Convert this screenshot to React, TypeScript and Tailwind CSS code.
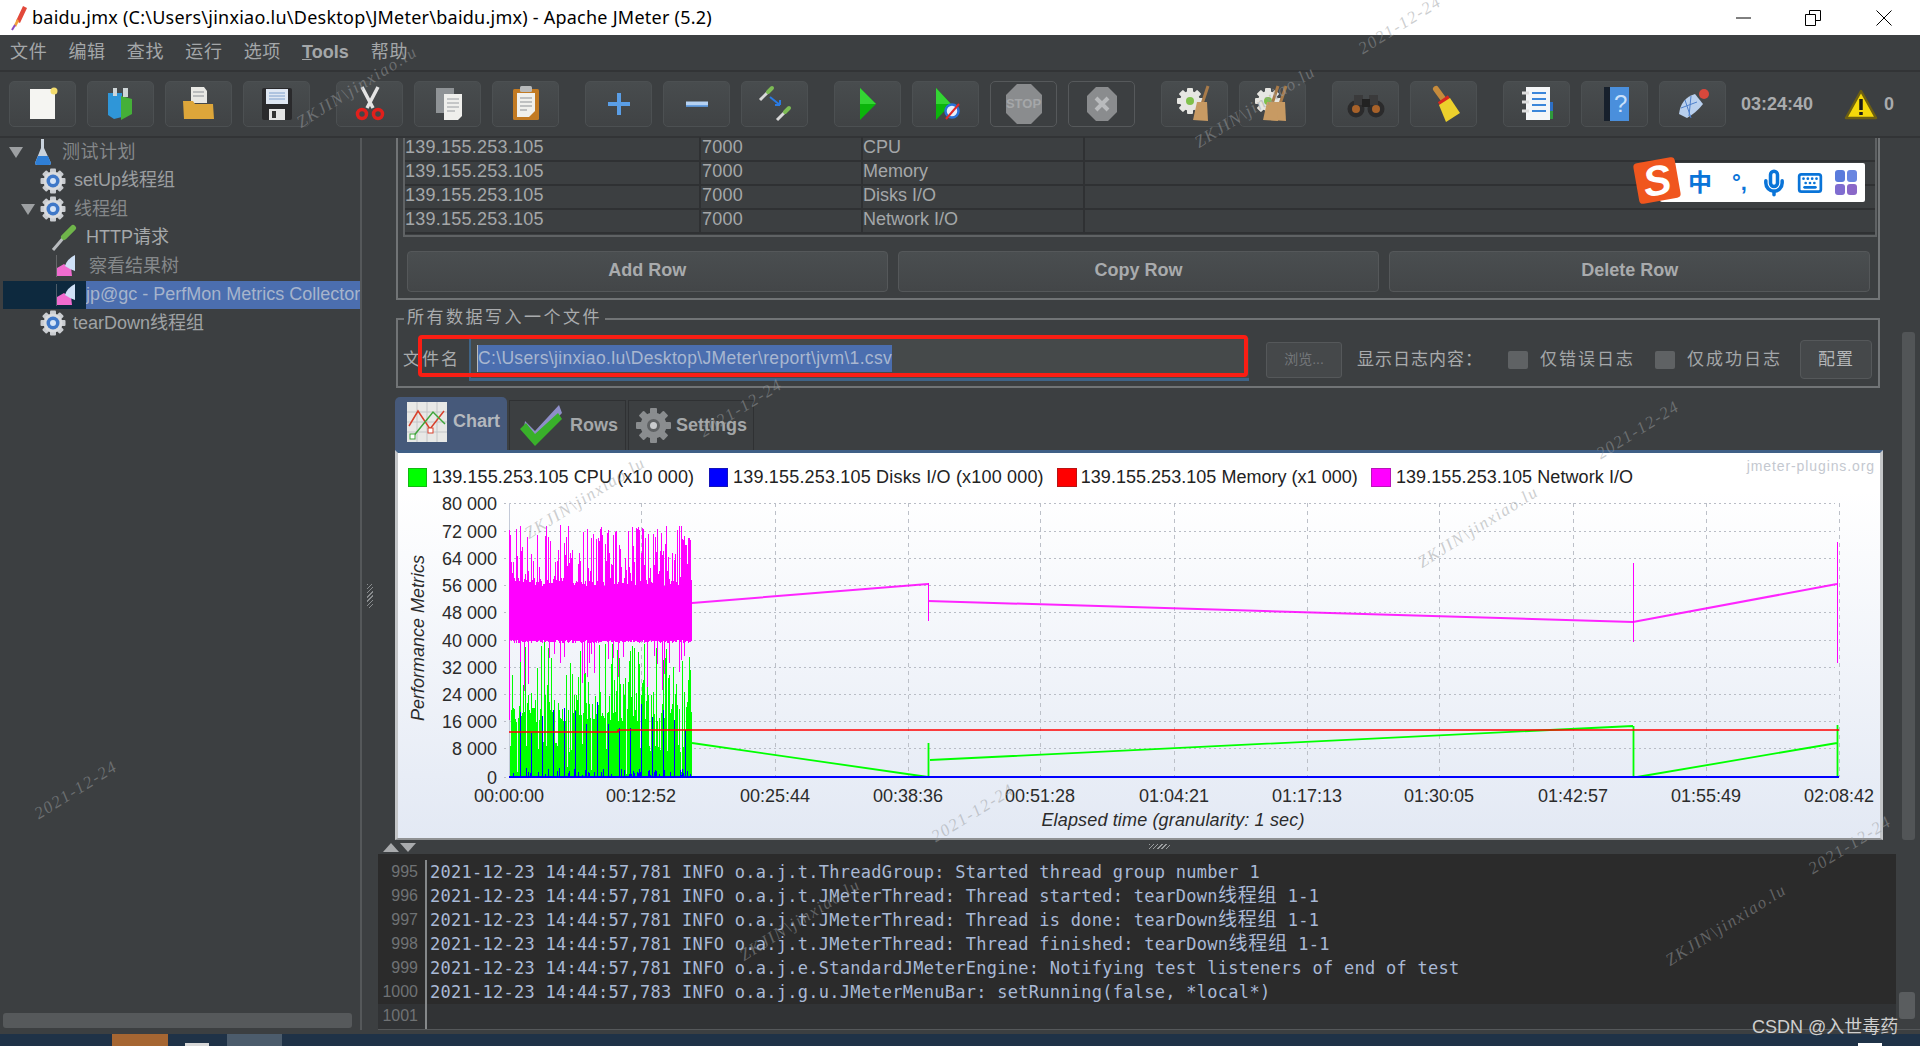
import React from 'react';
import { Mic, Keyboard } from 'lucide-react';

const menus = ['文件', '编辑', '查找', '运行', '选项', 'Tools', '帮助'];

const logLines = [
  ['995', '2021-12-23 14:44:57,781 INFO o.a.j.t.ThreadGroup: Started thread group number 1'],
  ['996', '2021-12-23 14:44:57,781 INFO o.a.j.t.JMeterThread: Thread started: tearDown线程组 1-1'],
  ['997', '2021-12-23 14:44:57,781 INFO o.a.j.t.JMeterThread: Thread is done: tearDown线程组 1-1'],
  ['998', '2021-12-23 14:44:57,781 INFO o.a.j.t.JMeterThread: Thread finished: tearDown线程组 1-1'],
  ['999', '2021-12-23 14:44:57,781 INFO o.a.j.e.StandardJMeterEngine: Notifying test listeners of end of test'],
  ['1000', '2021-12-23 14:44:57,783 INFO o.a.j.g.u.JMeterMenuBar: setRunning(false, *local*)'],
];

const metrics = ['CPU', 'Memory', 'Disks I/O', 'Network I/O'];

const yTicks: [string, number][] = [
  ['80 000', 503], ['72 000', 531], ['64 000', 558], ['56 000', 585], ['48 000', 612], ['40 000', 640],
  ['32 000', 667], ['24 000', 694], ['16 000', 721], ['8 000', 748], ['0', 777],
];

const xTicks: [string, number][] = [
  ['00:00:00', 509], ['00:12:52', 641], ['00:25:44', 775], ['00:38:36', 908], ['00:51:28', 1040], ['01:04:21', 1174],
  ['01:17:13', 1307], ['01:30:05', 1439], ['01:42:57', 1573], ['01:55:49', 1706], ['02:08:42', 1839],
];

const marks: [string, number, number][] = [
  ['ZKJIN\\jinxiao.lu', 357, 87], ['2021-12-24', 1400, 25], ['ZKJIN\\jinxiao.lu', 1255, 107], ['2021-12-24', 76, 790],
  ['ZKJIN\\jinxiao.lu', 585, 498], ['2021-12-24', 741, 408], ['ZKJIN\\jinxiao.lu', 1478, 527], ['2021-12-24', 1638, 430],
  ['2021-12-24', 973, 813], ['ZKJIN\\jinxiao.lu', 1726, 925], ['2021-12-24', 1850, 845], ['ZKJIN\\jinxiao.lu', 800, 920],
];

// noisy first part of the run, same picture on every render
let seed = 11;
const rnd = () => {
  seed = (seed * 16807) % 2147483647;
  return seed / 2147483647;
};

const buildSeries = () => {
  let pink = 'M509.5 530V720';
  let green = '';
  let blue = '';
  for (let x = 510; x < 692; x++) {
    const r = rnd();
    const top = r < 0.3 ? 525 + rnd() * 22 : r < 0.6 ? 548 + rnd() * 30 : 578 + rnd() * 8;
    const r2 = rnd();
    const bottom = r2 < 0.14 ? 652 + rnd() * 12 : r2 < 0.18 ? 668 + rnd() * 24 : 640 + rnd() * 3;
    pink += `M${x}.5 ${top.toFixed(0)}V${bottom.toFixed(0)}`;
    const g = rnd();
    const gt = g < 0.3 ? 642 + rnd() * 45 : g < 0.5 ? 690 + rnd() * 20 : g < 0.84 ? 708 + rnd() * 14 : g < 0.94 ? 742 + rnd() * 10 : 764 + rnd() * 10;
    green += `M${x}.5 ${gt.toFixed(0)}V777`;
    const b = rnd();
    if (x % 11 === 3) blue += `M${x}.5 ${(695 + rnd() * 45).toFixed(0)}V777`;
    else if (b < 0.28) blue += `M${x}.5 ${(768 + rnd() * 8).toFixed(0)}V777`;
  }
  return { pink, green, blue };
};

const series = buildSeries();

const Gear = ({ size = 26, center = '#3f78c8' }: { size?: number; center?: string }) => (
  <svg width={size} height={size} viewBox="0 0 26 26">
    {[0, 45, 90, 135].map((a) => (
      <rect key={a} x="10" y="0.5" width="6" height="25" rx="1" fill="#c9ccd0" transform={`rotate(${a} 13 13)`} />
    ))}
    <circle cx="13" cy="13" r="9.5" fill="#d9dbde" />
    <circle cx="13" cy="13" r="6.5" fill={center} />
    <circle cx="13" cy="13" r="3" fill="#d5e4f7" />
  </svg>
);

const Flask = () => (
  <svg width="18" height="28" viewBox="0 0 18 28">
    <path d="M7 1h3v9l7 15q0 2-2 2H3q-2 0-2-2l6-15z" fill="#c9d2dc" />
    <path d="M4 18h10l3 7q0 2-2 2H3q-2 0-2-2z" fill="#2f7fd6" />
  </svg>
);

const Pipette = () => (
  <svg width="28" height="27" viewBox="0 0 28 27">
    <path d="M2 26 14 12" stroke="#b9bcbf" strokeWidth="3" />
    <path d="M13 13 22 4" stroke="#6fb54a" strokeWidth="6" strokeLinecap="round" />
  </svg>
);

const Listener = () => (
  <svg width="21" height="22" viewBox="0 0 21 22">
    <path d="M1 21V13l7-4 5 4 2-1 1 9z" fill="#f06ccf" />
    <path d="M9 11Q11 4 19 0v16l-5-2z" fill="#cfe1f7" />
    <path d="M0 0v22" stroke="#8d9092" />
  </svg>
);

const Arrow = () => <span className="h-0 w-0 border-x-[7px] border-t-[11px] border-x-transparent border-t-[#9da0a2]" />;

const TreeRow = ({ indent, children, selected }: { indent: number; children: React.ReactNode; selected?: boolean }) => (
  <div className={`relative flex h-[28.5px] items-center whitespace-nowrap ${selected ? 'bg-[#0d293e]' : ''}`} style={{ paddingLeft: indent }}>
    {children}
  </div>
);

const ToolBtn = ({ children, off }: { children: React.ReactNode; off?: boolean }) => (
  <div className={`flex h-[46px] w-[67px] items-center justify-center rounded-[5px] border ${off ? 'border-[#56595b] bg-[#3c3f41]' : 'border-[#4c5052] bg-linear-to-b from-[#484c4e] to-[#404345]'}`}>
    {children}
  </div>
);

const Svg = ({ children }: { children: React.ReactNode }) => (
  <svg width="40" height="40" viewBox="0 0 40 40">{children}</svg>
);

const Broom = ({ x = 0 }: { x?: number }) => (
  <g transform={`translate(${x} 0)`}>
    <path d="M33 2 27 20" stroke="#a87b4a" strokeWidth="3" />
    <path d="M22 18h10l1 19-15-1z" fill="#c79a63" />
  </g>
);

const ConfigGear = () => (
  <g>
    {[0, 45, 90, 135].map((a) => (
      <rect key={a} x="12" y="4" width="6" height="26" rx="1" fill="#e6e6e2" transform={`rotate(${a} 15 17)`} />
    ))}
    <circle cx="15" cy="17" r="10" fill="#e6e6e2" />
    <circle cx="15" cy="17" r="4" fill="#7fc04a" />
  </g>
);

const Pen = ({ x, y }: { x: number; y: number }) => (
  <g transform={`translate(${x} ${y})`}>
    <path d="M0 13 8 5" stroke="#d8d8d8" strokeWidth="3" />
    <path d="M8 5 12 1" stroke="#7dbb55" strokeWidth="4" strokeLinecap="round" />
  </g>
);

const toolbar: { off?: boolean; icon: React.ReactNode }[][] = [
  [
    { icon: <Svg><rect x="7" y="5" width="25" height="30" fill="#f5f5f2" /><circle cx="31" cy="7" r="3.5" fill="#f3dc6e" /></Svg> },
    { icon: <Svg><path d="M7 9h14v24l-8 2-6-4z" fill="#2f96d8" /><path d="M20 12l11 3v15l-11 6z" fill="#45b038" /><path d="M12 4h4v8h-4zM22 4h5v9h-5z" fill="#cfd6d8" /></Svg> },
    { icon: <Svg><path d="M12 3h13l3 4v12H12z" fill="#e8e8e4" /><path d="M14 8h11M14 12h11" stroke="#8a8f95" /><path d="M4 17h10l2 3h18l1 15H5z" fill="#dda63a" /></Svg> },
    { icon: <Svg><rect x="5" y="4" width="30" height="32" rx="2" fill="#2a2a2c" /><rect x="9" y="5" width="22" height="15" fill="#dfe7f2" /><path d="M12 9h16M12 12h16M12 15h16" stroke="#7fa0cc" /><rect x="12" y="25" width="16" height="11" fill="#e4e4e4" /><rect x="15" y="27" width="4" height="7" fill="#333" /></Svg> },
  ],
  [
    { icon: <Svg><path d="M12 3 23 24M28 3 17 24" stroke="#e4e4e4" strokeWidth="3.5" /><circle cx="12" cy="30" r="4.5" fill="none" stroke="#e0201c" strokeWidth="3.5" /><circle cx="28" cy="30" r="4.5" fill="none" stroke="#e0201c" strokeWidth="3.5" /></Svg> },
    { icon: <Svg><rect x="8" y="4" width="18" height="25" fill="#8f9396" /><path d="M16 10h18v22l-4 4H16z" fill="#efefec" /><path d="M19 15h12M19 19h12M19 23h12M19 27h8" stroke="#9a9ea2" /></Svg> },
    { icon: <Svg><rect x="7" y="5" width="26" height="31" rx="1.5" fill="#c27a22" /><rect x="14" y="2" width="12" height="6" rx="1.5" fill="#b7b9ba" /><path d="M11 9h18v18l-6 6H11z" fill="#f0f0ec" /><path d="M14 14h12M14 18h12M14 22h12M14 26h7" stroke="#8d9195" /></Svg> },
  ],
  [
    { icon: <Svg><path d="M20 9v22M9 20h22" stroke="#5a9ee6" strokeWidth="4" /></Svg> },
    { icon: <Svg><path d="M9 20h22" stroke="#b6d2f2" strokeWidth="5" /><path d="M9 22h22" stroke="#4f8fd8" strokeWidth="1.5" /></Svg> },
    { icon: <Svg><Pen x={5} y={3} /><Pen x={22} y={23} /><path d="M15 13 25 21M25 21v-5M25 21h-5" stroke="#2a7ae2" strokeWidth="2" fill="none" /></Svg> },
  ],
  [
    { icon: <Svg><path d="M12 4 28 20 12 36z" fill="#0bb50b" /><path d="M12 4 28 20H12z" fill="#34d534" /></Svg> },
    { icon: <Svg><path d="M10 4 25 20 10 36z" fill="#0bb50b" /><path d="M10 4 25 20H10z" fill="#34d534" /><circle cx="26" cy="27" r="6.5" fill="#e7eefb" stroke="#2a72d8" strokeWidth="2.5" /><path d="M20 35 33 20" stroke="#e02828" strokeWidth="2" /></Svg> },
    { off: true, icon: <div className="relative flex h-[40px] w-[36px] items-center justify-center"><svg className="absolute inset-0" width="36" height="40" viewBox="0 0 36 40"><path d="M11 0h14l11 11v18L25 40H11L0 29V11z" fill="#8a8c8e" /></svg><span className="relative text-[13px] font-bold text-[#a5a7a9]">STOP</span></div> },
    { off: true, icon: <svg width="30" height="34" viewBox="0 0 30 34"><path d="M9 0h12l9 9v16l-9 9H9l-9-9V9z" fill="#8a8c8e" /><path d="M9 11 21 23M21 11 9 23" stroke="#b9bbbd" strokeWidth="4" /></svg> },
  ],
  [
    { icon: <Svg><ConfigGear /><Broom /></Svg> },
    { icon: <Svg><ConfigGear /><Broom /><Broom x={-8} /></Svg> },
  ],
  [
    { icon: <Svg><circle cx="10" cy="25" r="8.5" fill="#2b2b2c" /><circle cx="30" cy="25" r="8.5" fill="#2b2b2c" /><rect x="8" y="11" width="9" height="10" fill="#3a3a3b" /><rect x="23" y="11" width="9" height="10" fill="#3a3a3b" /><rect x="16" y="15" width="8" height="8" fill="#222" /><circle cx="10" cy="25" r="4" fill="#a8622a" /><circle cx="30" cy="25" r="4" fill="#a8622a" /></Svg> },
    { icon: <Svg><path d="M12 5 20 16" stroke="#c68b3c" strokeWidth="6" strokeLinecap="round" /><path d="M15 20 25 13" stroke="#d8261e" strokeWidth="4" /><path d="M15 21 26 14 36 29 22 38z" fill="#ecd02c" /></Svg> },
  ],
  [
    { icon: <Svg><rect x="9" y="3" width="24" height="33" fill="#f4f6f8" /><rect x="33" y="18" width="3" height="9" fill="#2d6fc4" /><rect x="33" y="27" width="3" height="8" fill="#2f9a3c" /><path d="M5 9h7M5 18h7M5 27h7" stroke="#ddd" strokeWidth="3" /><path d="M15 9h14M15 15h14M15 21h14M15 27h14" stroke="#3b86da" strokeWidth="2" /></Svg> },
    { icon: <Svg><rect x="9" y="3" width="25" height="34" fill="#4a8fdc" /><rect x="9" y="3" width="6" height="34" fill="#17202c" /><text x="19" y="28" fontSize="24" fill="#c9e0fa" fontFamily="Liberation Sans">?</text></Svg> },
    { icon: <Svg><path d="M6 30Q8 14 22 10l8 10q-6 8-16 14z" fill="#b9d0ee" /><path d="M8 24l16-6M12 16l6 18M18 12l-2 20" stroke="#4e80cc" /><circle cx="31" cy="10" r="5" fill="#d8483c" /></Svg> },
  ],
];

const LogText = ({ line }: { line: string }) => {
  const parts = line.split('线程组');
  if (parts.length === 1) return <span className="ml-[3px] whitespace-pre leading-[24px]">{line}</span>;
  return (
    <span className="ml-[3px] whitespace-pre leading-[24px]">
      {parts[0]}
      <span className="text-[19px] leading-none tracking-[0.8px]">线程组</span>
      {parts[1]}
    </span>
  );
};

const App = () => {
  return (
    <div className="relative flex h-[1046px] w-[1920px] flex-col overflow-hidden bg-[#3c3f41] font-['Liberation_Sans','Noto_Sans_CJK_SC',sans-serif] text-[18px] text-[#bbbbbb]">
      {/* title bar */}
      <div className="flex h-[35px] items-center bg-white pl-[8px] text-black">
        <svg width="20" height="30" viewBox="0 0 20 30">
          <path d="M8 18 15 3l4 2-7 15z" fill="#e2483a" />
          <path d="M6 22l3-6 2 2-3 6z" fill="#f2a03c" />
          <path d="M4 27l3-5" stroke="#8a4bc0" strokeWidth="2" />
        </svg>
        <span className="ml-[4px] whitespace-nowrap font-['Noto_Sans',sans-serif] text-[18px] tracking-[0.24px]">baidu.jmx (C:\Users\jinxiao.lu\Desktop\JMeter\baidu.jmx) - Apache JMeter (5.2)</span>
        <div className="ml-auto flex items-center pr-[28px]">
          <svg width="16" height="16" viewBox="0 0 16 16"><path d="M0 8h15" stroke="#000" /></svg>
          <svg className="ml-[53px]" width="16" height="16" viewBox="0 0 16 16"><path d="M.5 4.5h10v11H.5zM4.5 4V.5h11v10H11" fill="none" stroke="#000" /></svg>
          <svg className="ml-[55px]" width="16" height="16" viewBox="0 0 16 16"><path d="M.5.5l15 15M15.5.5l-15 15" stroke="#000" /></svg>
        </div>
      </div>

      {/* menu */}
      <div className="flex h-[37px] items-center gap-[21px] border-b-2 border-[#323436] pb-[1px] pl-[10px] text-[#a4a7a9]">
        {menus.map((m) => (
          <span key={m} className={m === 'Tools' ? 'mr-[1px] font-bold' : 'tracking-[0.7px]'}>
            {m === 'Tools' ? <><span className="underline">T</span>ools</> : m}
          </span>
        ))}
      </div>

      {/* toolbar */}
      <div className="flex h-[66px] items-center gap-[26px] border-b-2 border-[#323436] pl-[9px]">
        {toolbar.map((group, i) => (
          <div key={i} className="flex gap-[11px]">
            {group.map((b, j) => (
              <ToolBtn key={j} off={b.off}>{b.icon}</ToolBtn>
            ))}
          </div>
        ))}
        <div className="-ml-[11px] flex items-center">
          <span className="text-[18px] font-bold text-[#a9abad]">03:24:40</span>
          <svg className="ml-[31px]" width="34" height="31" viewBox="0 0 34 31">
            <path d="M17 2 32 29H2z" fill="#f5d90a" stroke="#6d5f12" strokeWidth="2.5" strokeLinejoin="round" />
            <path d="M17 10v11M17 23v3" stroke="#1a1a1a" strokeWidth="3.5" />
          </svg>
          <span className="ml-[6px] font-bold text-[#a9abad]">0</span>
        </div>
      </div>

      {/* main split */}
      <div className="flex h-[892px]">
        {/* tree */}
        <div className="flex w-[362px] flex-col border-r-2 border-[#55585a] pl-[3px]">
          <TreeRow indent={6}>
            <Arrow />
            <span className="ml-[11px] flex"><Flask /></span>
            <span className="ml-[10px] tracking-[0.5px] text-[#85888a]">测试计划</span>
          </TreeRow>
          <TreeRow indent={37}>
            <Gear />
            <span className="ml-[8px] text-[#9c9fa1]">setUp线程组</span>
          </TreeRow>
          <TreeRow indent={18}>
            <Arrow />
            <span className="ml-[5px] flex"><Gear /></span>
            <span className="ml-[8px] text-[#85888a]">线程组</span>
          </TreeRow>
          <TreeRow indent={48}>
            <Pipette />
            <span className="ml-[7px] text-[#a6a9ab]">HTTP请求</span>
          </TreeRow>
          <TreeRow indent={53}>
            <Listener />
            <span className="ml-[12px] text-[#85888a]">察看结果树</span>
          </TreeRow>
          <TreeRow indent={53} selected>
            <Listener />
            <span className="ml-[9px] flex h-full flex-1 items-center overflow-hidden bg-[#4b6eaf] text-[#a6b4cc]">jp@gc - PerfMon Metrics Collector</span>
          </TreeRow>
          <TreeRow indent={37}>
            <Gear />
            <span className="ml-[7px] text-[#a0a3a5]">tearDown线程组</span>
          </TreeRow>
          <div className="mt-auto mb-[2px] mr-[8px] h-[15px] rounded-[3px] bg-[#56595b]" />
        </div>

        {/* vertical divider */}
        <div className="flex w-[16px] items-center justify-center">
          <div className="mt-[24px] h-[24px] w-[6px] bg-[repeating-linear-gradient(135deg,#8a8d8f_0_1px,transparent_1px_3px)]" />
        </div>

        {/* right side */}
        <div className="flex w-[1542px] flex-col">
          <div className="flex h-[716px]">
            <div className="flex w-[1518px] flex-col pl-[17px]">
              {/* server table */}
              <div className="ml-[1px] flex h-[162px] w-[1484px] flex-col border-x-2 border-b-2 border-[#717476] px-[5px]">
                <div className="h-[99px] w-[1474px] border-x-2 border-b-2 border-[#5f6264]">
                  {metrics.map((m) => (
                    <div key={m} className="grid h-[24px] grid-cols-[296px_162px_222px_1fr] border-b-2 border-[#2f3133] text-[#a4a7a9]">
                      <span className="-mt-[1px] border-r-2 border-[#2f3133] leading-[20px] tracking-[0.25px]">139.155.253.105</span>
                      <span className="-mt-[1px] border-r-2 border-[#2f3133] pl-[1px] leading-[20px] tracking-[0.25px]">7000</span>
                      <span className="-mt-[1px] border-r-2 border-[#2f3133] leading-[20px]">{m}</span>
                      <span />
                    </div>
                  ))}
                </div>
                <div className="mt-[14px] flex gap-[10.5px] pl-[4px] pr-[3px]">
                  {['Add Row', 'Copy Row', 'Delete Row'].map((b) => (
                    <div key={b} className="flex h-[41px] flex-1 items-center justify-center rounded-[4px] border border-[#55585a] bg-linear-to-b from-[#4a4e50] to-[#434648] pb-[2px] font-bold text-[#a9abad]">
                      {b}
                    </div>
                  ))}
                </div>
              </div>

              {/* output file */}
              <div className="relative ml-[1px] mt-[18px] flex h-[70px] w-[1484px] items-center border-2 border-[#717476] pl-[5px] pt-[13px]">
                <span className="absolute -top-[15px] left-[6px] bg-[#3c3f41] px-[3px] text-[17px] tracking-[2.5px] text-[#a9abad]">所有数据写入一个文件</span>
                <span className="w-[66px] text-[17px] tracking-[2px] text-[#a9abad]">文件名</span>
                <div className="flex h-[43px] w-[780px] items-center border-b-[3px] border-l-2 border-[#3f6487] bg-[#45494a] pl-[6px]">
                  <span className="flex h-[27px] items-center whitespace-nowrap border-l border-[#bbbbbb] bg-[#4b6eaf] text-[17.5px] tracking-[0.34px] text-[#a9b7d0]">C:\Users\jinxiao.lu\Desktop\JMeter\report\jvm\1.csv</span>
                </div>
                <div className="ml-[17px] flex h-[36px] w-[76px] items-center justify-center rounded-[3px] border border-[#55585a] bg-[#45484a] text-[14px] text-[#74777a]">浏览...</div>
                <span className="ml-[15px] text-[17px] tracking-[1px] text-[#a9abad]">显示日志内容：</span>
                <span className="ml-[25px] h-[18px] w-[20px] rounded-[2px] bg-[#5f6264]" />
                <span className="ml-[12px] text-[17px] tracking-[2px] text-[#a4a7a9]">仅错误日志</span>
                <span className="ml-[20px] h-[18px] w-[20px] rounded-[2px] bg-[#5f6264]" />
                <span className="ml-[12px] text-[17px] tracking-[2px] text-[#a4a7a9]">仅成功日志</span>
                <div className="ml-[18px] flex h-[39px] w-[72px] items-center justify-center rounded-[4px] border border-[#55585a] bg-[#45484a] text-[17px] tracking-[1px] text-[#b4b6b8]">配置</div>
              </div>

              {/* tabs */}
              <div className="mt-[9px] flex h-[53px] items-end gap-[2px]">
                <div className="flex h-[53px] w-[112px] items-center rounded-t-[5px] bg-[#46597a] pb-[4px] pl-[12px]">
                  <svg width="40" height="40" viewBox="0 0 40 40">
                    <rect width="40" height="40" fill="#e8e8e6" />
                    <path d="M0 10h40M0 20h40M0 30h40M10 0v40M20 0v40M30 0v40" stroke="#c4c6c8" />
                    <path d="M2 24 11 9l12 18 14-18" fill="none" stroke="#d8402c" strokeWidth="1.5" />
                    <path d="M5 36 26 10l12 12" fill="none" stroke="#3ea53a" strokeWidth="1.5" />
                    <rect x="21" y="26" width="5" height="5" fill="#fff" stroke="#d8402c" />
                    <rect x="3" y="32" width="5" height="5" fill="#fff" stroke="#3ea53a" />
                  </svg>
                  <span className="ml-[6px] font-bold text-[#b4b8be]">Chart</span>
                </div>
                <div className="flex h-[50px] w-[117px] items-center border-x border-t border-[#2f3133] pl-[9px]">
                  <svg width="45" height="45" viewBox="0 0 45 45">
                    <path d="M6 18 16 28 40 2l3 8-26 27-12-12z" fill="#8e8ec8" />
                    <path d="M1 26l6-6 9 11 23-21 4 6-27 27z" fill="#39b02a" />
                  </svg>
                  <span className="ml-[6px] font-bold text-[#a4a7a9]">Rows</span>
                </div>
                <div className="flex h-[50px] w-[126px] items-center border-x border-t border-[#2f3133] pl-[7px]">
                  <svg width="35" height="35" viewBox="0 0 35 35">
                    {[0, 45, 90, 135].map((a) => (
                      <rect key={a} x="14" y="0" width="7" height="35" rx="1" fill="#8a8d8f" transform={`rotate(${a} 17.5 17.5)`} />
                    ))}
                    <circle cx="17.5" cy="17.5" r="13" fill="#8a8d8f" />
                    <circle cx="17.5" cy="17.5" r="6.5" fill="#5e6163" />
                    <circle cx="17.5" cy="17.5" r="3.5" fill="#c9cbcd" />
                  </svg>
                  <span className="ml-[5px] font-bold text-[#a4a7a9]">Settings</span>
                </div>
              </div>

              {/* chart */}
              <div className="relative h-[390px] w-[1488px] border-x-[3px] border-b-[2px] border-t-[3px] border-b-[#8f9193] border-l-[#c4c6c8] border-r-[#c4c6c8] border-t-[#3f5f86] bg-linear-to-b from-white from-10% to-[#e3e9f4]">
                <span className="absolute right-[5px] top-[3px] text-[14px] tracking-[0.9px] text-[#c4c8d0]">jmeter-plugins.org</span>
                <div className="flex h-[44px] items-center pl-[10px] pt-[5px] text-[18px] text-[#222222]">
                  <span className="h-[19px] w-[19px] border border-[#14b814] bg-[#00ff00]" />
                  <span className="ml-[5px] tracking-[0.1px]">139.155.253.105 CPU (x10 000)</span>
                  <span className="ml-[15px] h-[19px] w-[19px] border border-[#1414b8] bg-[#0000ff]" />
                  <span className="ml-[5px] tracking-[0.18px]">139.155.253.105 Disks I/O (x100 000)</span>
                  <span className="ml-[13px] h-[19px] w-[20px] border border-[#b81414] bg-[#ff0000]" />
                  <span className="ml-[4px] tracking-[0.03px]">139.155.253.105 Memory (x1 000)</span>
                  <span className="ml-[13px] h-[19px] w-[20px] border border-[#b814b8] bg-[#ff00ff]" />
                  <span className="ml-[5px] tracking-[0.08px]">139.155.253.105 Network I/O</span>
                </div>
                <svg className="block" width="1482" height="341" viewBox="398 497 1482 341" fontFamily="Liberation Sans" fontSize="18" fill="#2b2b2b">
                  {yTicks.map(([label, y]) => (
                    <g key={label}>
                      <path d={`M504 ${y}.5H1835`} stroke="#b9bdc6" strokeDasharray="2 3" />
                      <text x="497" y={y + 7} textAnchor="end">{label}</text>
                    </g>
                  ))}
                  {xTicks.map(([label, x]) => (
                    <g key={label}>
                      {x > 509 && <path d={`M${x}.5 503V777`} stroke="#bcc0c8" strokeDasharray="4 4" />}
                      <text x={x} y="802" textAnchor="middle">{label}</text>
                    </g>
                  ))}
                  <path d="M509.5 503V777" stroke="#c4cad8" />
                  <text transform="translate(424 638) rotate(-90)" textAnchor="middle" fontStyle="italic">Performance Metrics</text>
                  <text x="1173" y="826" textAnchor="middle" fontStyle="italic" letterSpacing="0.15">Elapsed time (granularity: 1 sec)</text>

                  <path d={series.green} stroke="#00ff00" />
                  <path d="M692 743 928 777M928.5 743V777M930 760 1633 726M1633.5 726V777M1637 777 1837 743M1837.5 725V777" stroke="#00ff00" strokeWidth="1.8" fill="none" />
                  <path d={series.blue} stroke="#0000ff" />
                  <path d={series.pink} stroke="#ff00ff" />
                  <path d="M692 603 928 584M928 601 1633 622 1837 584" stroke="#ff00ff" strokeWidth="2" strokeOpacity="0.85" fill="none" />
                  <path d="M928.5 583V621M1633.5 563V642M1837.5 542V663" stroke="#ff00ff" fill="none" />
                  <path d="M509 732H618V730H1839" stroke="#ff0000" strokeWidth="1.6" fill="none" />
                  <path d="M509 777H1839" stroke="#0000ff" strokeWidth="2" />
                </svg>
              </div>

              {/* horizontal divider */}
              <div className="relative flex h-[14px] w-[1488px] items-start pt-[3px]">
                <span className="-ml-[12px] h-0 w-0 border-x-[8px] border-b-[9px] border-x-transparent border-b-[#a9abad]" />
                <span className="ml-[1px] h-0 w-0 border-x-[8px] border-t-[9px] border-x-transparent border-t-[#a9abad]" />
                <div className="ml-[733px] mt-[1px] h-[5px] w-[21px] bg-[repeating-linear-gradient(135deg,#9a9d9f_0_1px,transparent_1px_3px)]" />
              </div>
            </div>

            {/* outer scrollbar */}
            <div className="w-[24px] pb-[14px] pl-[6px] pt-[194px]">
              <div className="h-full w-[13px] rounded-[3px] bg-[#525557]" />
            </div>
          </div>

          {/* log */}
          <div className="flex h-[176px] border-b border-[#55585a]">
            <div className="flex w-[1518px] flex-col overflow-hidden bg-[#2b2b2b] pt-[6px] font-['DejaVu_Sans_Mono','Noto_Sans_CJK_SC',monospace] text-[17px] tracking-[0.27px] text-[#a9b9d6]">
              {logLines.map(([n, line]) => (
                <div key={n} className="flex h-[24px] shrink-0 items-start overflow-hidden">
                  <span className="h-full w-[49px] shrink-0 border-r-2 border-[#85888a] pr-[7px] text-right font-['Liberation_Sans',sans-serif] text-[16px] leading-[24px] tracking-normal text-[#6f7274]">{n}</span>
                  <LogText line={line} />
                </div>
              ))}
              <div className="flex flex-1 bg-[#313335]">
                <span className="h-full w-[49px] shrink-0 border-r-2 border-[#85888a] pr-[7px] text-right font-['Liberation_Sans',sans-serif] text-[16px] leading-[24px] tracking-normal text-[#6f7274]">1001</span>
              </div>
            </div>
            <div className="flex w-[24px] flex-col justify-end bg-[#3c3f41] pb-[10px] pl-[3px]">
              <div className="h-[27px] w-[16px] rounded-[3px] bg-[#5a5d5f]" />
            </div>
          </div>
        </div>
      </div>

      {/* strip under panels */}
      <div className="h-[4px] bg-[#3c3f41]" />

      {/* taskbar, only its top edge is on screen */}
      <div className="relative flex h-[12px] bg-[#1f3247]">
        <div className="ml-[112px] w-[56px] bg-[#a66632]" />
        <div className="ml-[17px] mt-[9px] h-[3px] w-[24px] bg-[#d8d8d8]" />
        <div className="ml-[18px] w-[55px] bg-[#4c5c6c]" />
        <div className="ml-auto mr-[38px] mt-[9px] h-[3px] w-[24px] bg-white" />
      </div>

      {/* red annotation round the file name */}
      <div className="pointer-events-none absolute left-[418px] top-[335px] h-[42px] w-[830px] rounded-[4px] border-[4px] border-[#fa1e14]" />

      {/* input method bar */}
      <div className="absolute left-[1660px] top-[163px] flex h-[39px] w-[205px] items-center rounded-[2px] bg-white pl-[28px] text-[#0a74d8]">
        <span className="text-[24px] font-bold leading-none">中</span>
        <span className="ml-[20px] text-[22px] font-bold leading-none">°,</span>
        <Mic className="ml-[13px]" size={28} strokeWidth={3} />
        <Keyboard className="ml-[9px]" size={26} strokeWidth={2.5} />
        <span className="ml-[12px] grid h-[25px] w-[22px] grid-cols-2 gap-[2px]">
          <i className="rounded-[3px] bg-[#5a7bdc]" />
          <i className="rounded-[3px] bg-[#6a86e0]" />
          <i className="rounded-[3px] bg-[#7f6cd0]" />
          <i className="rounded-[3px] bg-[#8a68c8]" />
        </span>
      </div>
      <div className="absolute left-[1636px] top-[160px] flex h-[41px] w-[42px] -rotate-[10deg] items-center justify-center rounded-[4px] bg-[#f0561e] text-[42px] font-bold italic leading-none text-white">S</div>

      {/* watermarks */}
      {marks.map(([text, x, y], i) => (
        <span
          key={i}
          className="pointer-events-none absolute -translate-x-1/2 -translate-y-1/2 -rotate-[32deg] whitespace-nowrap font-['Liberation_Serif',serif] text-[17px] italic tracking-[1.5px] text-[#9a9da0]/50"
          style={{ left: x, top: y }}
        >
          {text}
        </span>
      ))}

      <span className="absolute left-[1752px] top-[1014px] text-[18px] text-[#cfcfcf]">CSDN @入世毒药</span>
    </div>
  );
};

export default App;
